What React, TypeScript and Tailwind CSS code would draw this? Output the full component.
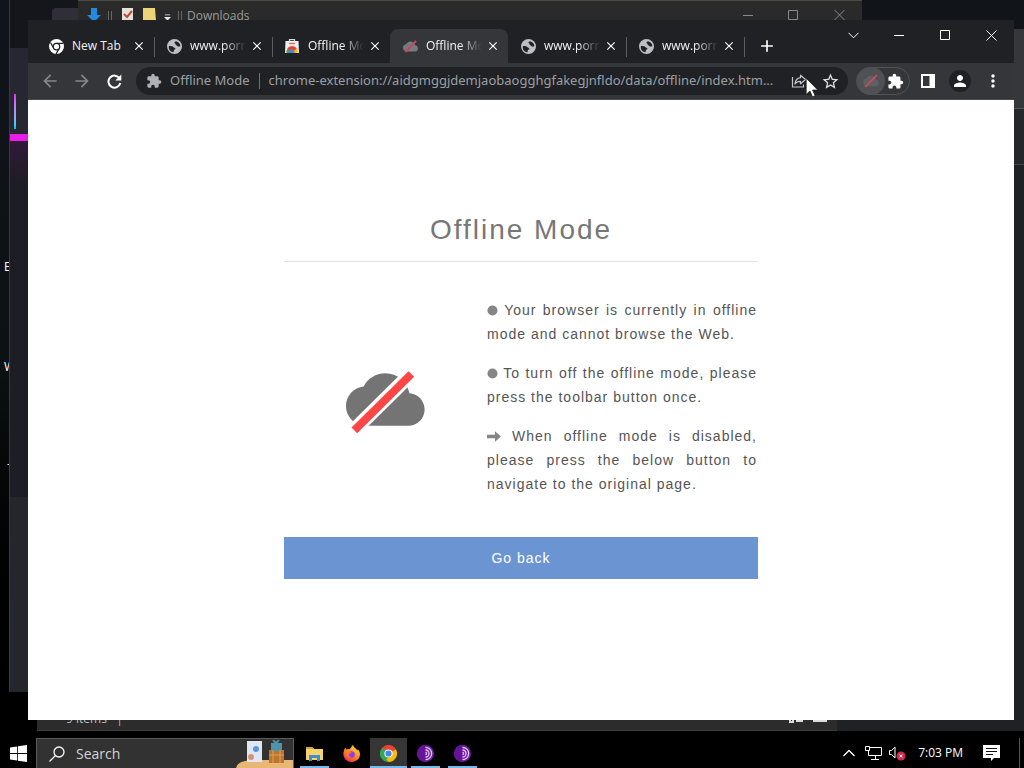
import React from 'react';
import {
  MdAdd,
  MdArrowBack,
  MdArrowForward,
  MdClose,
  MdExtension,
  MdMoreVert,
  MdPerson,
  MdStarBorder,
} from 'react-icons/md';

const CLOUD =
  'M19.35 10.04C18.67 6.59 15.64 4 12 4 9.11 4 6.6 5.64 5.35 8.04 2.34 8.36 0 10.91 0 14c0 3.31 2.69 6 6 6h13c2.76 0 5-2.24 5-5 0-2.64-2.05-4.78-4.65-4.96z';

function ChromeMono() {
  return (
    <svg width="15" height="15" viewBox="0 0 24 24" fill="none">
      <circle cx="12" cy="12" r="12" fill="#fff" />
      <path d="M12 6.8h10.6M7.5 14.6L2.3 5.6M16.5 14.6L11.3 24" stroke="#202124" strokeWidth="2" />
      <circle cx="12" cy="12" r="5.2" fill="#fff" stroke="#202124" strokeWidth="2" />
    </svg>
  );
}

function ChromeColor() {
  return (
    <svg width="17" height="17" viewBox="0 0 24 24">
      <path d="M12 12L1.6 6A12 12 0 0 1 22.4 6z" fill="#ea4335" />
      <path d="M12 12L22.4 6A12 12 0 0 1 12 24z" fill="#fbbc05" />
      <path d="M12 12L12 24A12 12 0 0 1 1.6 6z" fill="#34a853" />
      <path d="M12 6.4h10.6L22.4 6 12 4z" fill="#ea4335" />
      <path d="M16.9 14.8L12 24 9 20z" fill="#fbbc05" />
      <path d="M7.1 14.8L1.6 6l6-.5z" fill="#34a853" />
      <circle cx="12" cy="12" r="5.8" fill="#fff" />
      <circle cx="12" cy="12" r="4.4" fill="#4285f4" />
    </svg>
  );
}

function WebStore() {
  return (
    <svg width="14" height="14" viewBox="0 0 14 14">
      <path d="M4.5 2.5V.6h5v1.9" fill="none" stroke="#d8dadd" strokeWidth="1.2" />
      <path d="M.5 2h13L14 14H0z" fill="#eceef0" />
      <path d="M1.6 14a5.4 5.4 0 0 1 1-4.6L7 12v2z" fill="#34a853" />
      <path d="M7 12l4.6-2.5A5.4 5.4 0 0 1 12.4 14H7z" fill="#fbbc05" />
      <path d="M2.4 9.7a5.4 5.4 0 0 1 9.3 0L9 11.6H5z" fill="#ea4335" />
      <circle cx="7" cy="13" r="2.4" fill="#4285f4" />
      <path d="M4 4.5h6" stroke="#e46a60" strokeWidth="1.4" />
    </svg>
  );
}

function CloudTab() {
  return (
    <svg width="15" height="15" viewBox="0 0 24 24">
      <path d={CLOUD} fill="#777a7e" />
      <path d="M4 21L21 3" stroke="#c2485a" strokeWidth="3.4" />
    </svg>
  );
}

function CloudOff() {
  return (
    <svg width="81" height="65" viewBox="75 55 243 195" role="img" aria-label="Offline">
      <path d={CLOUD} fill="#747474" transform="translate(78 28.7) scale(9.83)" />
      <path d="M88 252L287 56" stroke="#fff" strokeWidth="43" />
      <path d="M103 239L274 70" stroke="#fd4646" strokeWidth="24" />
    </svg>
  );
}

function Bullet() {
  return (
    <svg className="mb-px inline-block" width="11" height="11" viewBox="0 0 11 11">
      <circle cx="5.5" cy="5.5" r="5" fill="#858585" />
    </svg>
  );
}

function ArrowBullet() {
  return (
    <svg className="mb-px inline-block" width="14" height="11" viewBox="0 0 14 11">
      <path d="M0 3.7h8V.3l6 5.2-6 5.2V7.3H0z" fill="#858585" />
    </svg>
  );
}

function Globe() {
  return (
    <svg width="15" height="15" viewBox="0 0 16 16">
      <circle cx="8" cy="8" r="8" fill="#bcbfc3" />
      <path d="M9.5 2.3C8 3 7.500 4 8.500 4.600c1 .5.3 1.500 1.400 2C11 7 10.900 8 12.200 8.100c.8 0 1.300-.4 2.100-.3A6.300 6.300 0 0 0 9.500 2.300z" fill="#202124" />
      <path d="M1.900 7.600C3.500 7.400 6 7.600 6.700 8.500c.7 1 2 .7 2.200 1.700.2 1.200-1.500 1-1.700 2.100-.1.8-.2 1.300-.3 1.900A6.300 6.300 0 0 1 1.900 7.600z" fill="#202124" />
    </svg>
  );
}

const tabs = [
  { title: 'New Tab', icon: <ChromeMono />, active: false },
  { title: 'www.porn', icon: <Globe />, active: false },
  { title: 'Offline Mode', icon: <WebStore />, active: false },
  { title: 'Offline Mode', icon: <CloudTab />, active: true },
  { title: 'www.porn', icon: <Globe />, active: false },
  { title: 'www.porn', icon: <Globe />, active: false },
];

function Tab({ title, icon, active, divider }: { title: string; icon: React.ReactNode; active: boolean; divider: boolean }) {
  return (
    <div className={`relative flex h-full w-[118px] items-center pl-3 pr-[7px] ${active ? 'rounded-t-lg bg-[#35363a]' : ''}`}>
      <button role="tab" aria-selected={active} className="flex min-w-0 flex-1 items-center gap-2">
        <span className="flex w-4 shrink-0 justify-center">{icon}</span>
        <span
          className={`w-[57px] shrink-0 overflow-hidden whitespace-nowrap text-left text-xs text-[#f1f2f4] ${
            title === 'New Tab' ? '' : '[mask-image:linear-gradient(to_right,#000_60%,transparent_98%)]'
          }`}
        >
          {title}
        </span>
      </button>
      <button aria-label={`Close ${title}`} className="flex h-4 w-4 items-center justify-center text-white">
        <MdClose size={14} />
      </button>
      {divider && <span className="absolute -right-px top-2 h-5 w-px bg-[#5b5d61]" />}
    </div>
  );
}

function WindowButtons() {
  return (
    <div className="flex h-[30px] items-center text-white">
      <button aria-label="Search tabs" className="flex w-[46px] justify-center">
        <svg width="11" height="7" viewBox="0 0 11 7" fill="none" stroke="currentColor">
          <path d="M.5 .8l5 5 5-5" />
        </svg>
      </button>
      <button aria-label="Minimize" className="flex w-[46px] justify-center">
        <svg width="10" height="10" viewBox="0 0 10 10" stroke="currentColor">
          <path d="M0 5.5h10" />
        </svg>
      </button>
      <button aria-label="Maximize" className="flex w-[46px] justify-center">
        <svg width="10" height="10" viewBox="0 0 10 10" fill="none" stroke="currentColor">
          <path d="M.5 .5h9v9h-9z" />
        </svg>
      </button>
      <button aria-label="Close" className="flex w-[46px] justify-center">
        <svg width="11" height="11" viewBox="0 0 11 11" stroke="currentColor">
          <path d="M.5 .5l10 10M10.5 .5l-10 10" />
        </svg>
      </button>
    </div>
  );
}

function Toolbar() {
  return (
    <div className="flex h-[37px] shrink-0 items-center border-b border-[#4a4b4e] bg-[#35363a] pl-3 pr-3">
      <div className="flex w-24 shrink-0 items-center gap-3">
        <button aria-label="Back" className="text-[#85878b]">
          <MdArrowBack size={20} />
        </button>
        <button aria-label="Forward" className="text-[#85878b]">
          <MdArrowForward size={20} />
        </button>
        <button aria-label="Reload" className="flex w-5 justify-center text-white">
          <svg width="15" height="15" viewBox="0 0 15 15">
            <path d="M12.6 4.500A6 6 0 1 0 13.300 9" fill="none" stroke="currentColor" strokeWidth="2" />
            <path d="M14.300 .5v6h-6z" fill="currentColor" />
          </svg>
        </button>
      </div>
      <div className="flex h-7 min-w-0 flex-1 items-center rounded-full bg-[#202124] pl-[10px] pr-2 font-['Noto_Sans','Open_Sans',sans-serif] text-[13px] text-[#9aa0a6]">
        <MdExtension size={16} className="shrink-0 text-[#aeb1b5]" />
        <span className="ml-2 shrink-0">Offline Mode</span>
        <span className="mx-[9px] h-4 w-px shrink-0 bg-[#6d7074]" />
        <input
          aria-label="Address"
          readOnly
          value="chrome-extension://aidgmggjdemjaobaogghgfakegjnfldo/data/offline/index.htm..."
          className="min-w-0 flex-1 bg-transparent outline-none"
        />
        <button aria-label="Share" className="relative ml-2 mr-[14px] shrink-0 text-[#c3c6ca]">
          <svg width="16" height="16" viewBox="0 0 16 16" fill="none" stroke="currentColor" strokeWidth="1.2">
            <path d="M1.5 4v10h11v-2.5" />
            <path d="M9.5 2.2l5 4.3-5 4.3V8.3C7 8.2 5.3 9 4 11c.3-3.5 2.3-5.9 5.5-6.3z" strokeLinejoin="round" />
          </svg>
          {/* mouse pointer */}
          <svg className="absolute left-[14px] top-1 z-10" width="14" height="21" viewBox="0 0 12 18">
            <path d="M1 1v14l3.2-3 2.2 5 2.3-1-2.2-4.8H11z" fill="#fff" stroke="#202124" strokeWidth=".7" />
          </svg>
        </button>
        <button aria-label="Bookmark" className="shrink-0 text-[#dfe1e4]">
          <MdStarBorder size={19} />
        </button>
      </div>
      <div className="ml-2 flex h-7 w-[54px] shrink-0 items-center rounded-full border border-[#505256]">
        <button aria-label="Offline Mode extension" className="flex h-7 w-7 items-center justify-center rounded-full bg-[#4f5155]">
          <svg width="16" height="16" viewBox="0 0 24 24">
            <path d={CLOUD} fill="#5e6064" />
            <path d="M3 21L21 3" stroke="#d8485c" strokeWidth="2.4" />
          </svg>
        </button>
        <button aria-label="Extensions" className="ml-[2px] text-white">
          <MdExtension size={17} />
        </button>
      </div>
      <button aria-label="Side panel" className="ml-[11px] shrink-0 text-white">
        <svg width="14" height="14" viewBox="0 0 14 14">
          <path d="M0 0h14v14H0zM2 2v10h6.5V2z" fill="currentColor" fillRule="evenodd" />
        </svg>
      </button>
      <button aria-label="Profile" className="ml-[14px] flex h-[22px] w-[22px] shrink-0 items-center justify-center rounded-full bg-[#202124] text-white">
        <MdPerson size={18} />
      </button>
      <button aria-label="Menu" className="-mr-px ml-3 shrink-0 text-white">
        <MdMoreVert size={20} />
      </button>
    </div>
  );
}

function OfflinePage() {
  return (
    <main className="flex-1 overflow-hidden bg-white font-['Liberation_Sans',Arial,sans-serif] tracking-[1px] text-[#555]">
      <div className="mx-auto w-full max-w-[474px] pt-[110px]">
        <h1 className="border-b border-[#e3e3e3] pb-[11px] text-center text-[28px] leading-10 tracking-[2px] text-[#777]">
          Offline Mode
        </h1>
        <div className="mt-9 flex items-center">
          <div className="flex flex-1 justify-center pt-2">
            <CloudOff />
          </div>
          <div className="mr-px flex w-[270px] flex-col gap-[15px] text-justify text-sm leading-6">
            <p>
              <Bullet /> Your browser is currently in offline mode and cannot browse the Web.
            </p>
            <p>
              <Bullet /> To turn off the offline mode, please press the toolbar button once.
            </p>
            <p>
              <ArrowBullet /> When offline mode is disabled, please press the below button to navigate to the original page.
            </p>
          </div>
        </div>
        <button className="mt-[41px] h-[42px] w-full bg-[#6a95d2] text-sm tracking-[1px] text-white">Go back</button>
      </div>
    </main>
  );
}

function Grip() {
  return (
    <svg className="mt-1" width="4" height="9" viewBox="0 0 4 9" stroke="#666">
      <path d="M.5 0v9M3.5 0v9" />
    </svg>
  );
}

function BackgroundWindows() {
  return (
    <div className="absolute inset-0 overflow-hidden bg-gradient-to-b from-[#11141b] via-[#0d1114] to-black text-xs text-white">
      <span className="absolute left-1 top-[259px]">E</span>
      <span className="absolute left-1 top-[359px]">W</span>
      <span className="absolute left-[7px] top-[456px]">-</span>

      {/* code editor */}
      <div className="absolute bottom-[46px] left-[9px] top-0 w-[300px] border-l border-[#3a3b40] bg-[#1d1d25]">
        <div className="h-12 bg-[#15161c]" />
        <div className="h-[86px] bg-[#272732] pl-1 pt-[46px]">
          <div className="h-[35px] w-[2px] bg-gradient-to-b from-fuchsia-500 to-cyan-400" />
        </div>
        <div className="h-[7px] bg-[#e91ee6]" />
        <div className="h-10 bg-gradient-to-b from-[#32183a] to-[#1d1d25]" />
        <div className="absolute inset-x-0 bottom-0 h-[195px] bg-[#25262b]" />
      </div>

      <div className="absolute bottom-[7px] right-0 top-0 w-[500px] bg-[#202124]">
        <div className="h-[30px] border-b border-[#34363a] bg-[#111418]" />
        <div className="h-[79px] border-b border-[#55565a] bg-[#36373b]" />
        <div className="h-14 border-b border-[#48494d] bg-[#26272a]" />
      </div>

      {/* file explorer, status bar only */}
      <div className="absolute bottom-[7px] left-[37px] h-6 w-[800px] border-b border-[#3b3b3b] bg-[#2c2c2c] pl-[29px] text-[#bbb]">
        <span className="leading-6">9 items &nbsp; |</span>
        <svg className="absolute right-2 top-1" width="40" height="12" viewBox="0 0 40 12">
          <path d="M1 8v3h3V8M7 10h7M24 10h14" fill="none" stroke="#ddd" strokeWidth="2" />
        </svg>
      </div>

      {/* file explorer, title bar only */}
      <div className="absolute left-[52px] top-2 h-6 w-8 rounded bg-[#302f38]" />
      <div className="absolute left-[78px] right-[162px] top-0 flex h-9 items-start border-t border-[#4a4b45] bg-[#292a29] pl-2 pt-[6px] text-[#999]">
        <svg className="mt-px" width="16" height="14" viewBox="0 0 16 14">
          <path d="M5 0h6v7h4l-7 7-7-7h4z" fill="#2589dd" />
        </svg>
        <span className="ml-[6px]">
          <Grip />
        </span>
        <svg className="ml-[9px] mt-px" width="13" height="13" viewBox="0 0 13 13">
          <path d="M1 0h11v13H1z" fill="#e4e2df" />
          <path d="M3 6l3 3 5-6" fill="none" stroke="#b5532c" strokeWidth="2" />
        </svg>
        <svg className="ml-[9px] mt-px" width="13" height="13" viewBox="0 0 13 13">
          <path d="M0 0h12l1 13H0z" fill="#ecd578" />
        </svg>
        <svg className="ml-2 mt-[7px]" width="7" height="7" viewBox="0 0 8 7" fill="#eee">
          <path d="M1 0h6v1H1zM0 3h8L4 7z" />
        </svg>
        <span className="ml-[7px]">
          <Grip />
        </span>
        <span className="ml-[5px] leading-[18px]">Downloads</span>
        <svg className="ml-auto mr-[17px] mt-[3px]" width="102" height="10" viewBox="0 0 102 10" fill="none" stroke="#8a8a88">
          <path d="M0 5.5h10M45.5 .5h9v9h-9zM91.5 0l10 10M101.5 0l-10 10" />
        </svg>
      </div>
    </div>
  );
}

function Tor() {
  return (
    <svg width="17" height="17" viewBox="0 0 16 16" fill="none">
      <circle cx="8" cy="8" r="8" fill="#7421a4" />
      <path d="M8 0a8 8 0 0 0 0 16z" fill="#65149a" />
      <path d="M8 2.2a5.8 5.8 0 0 1 0 11.6M8 4.7a3.3 3.3 0 0 1 0 6.6M8 7a1 1 0 0 1 0 2" stroke="#e6c7f7" strokeWidth="1.2" />
    </svg>
  );
}

function Firefox() {
  return (
    <svg width="17" height="17" viewBox="0 0 24 24">
      <defs>
        <linearGradient id="fox" x1="0.8" y1="0" x2="0.2" y2="1">
          <stop offset="0" stopColor="#ffe14a" />
          <stop offset="0.5" stopColor="#ff8a1f" />
          <stop offset="1" stopColor="#f2255e" />
        </linearGradient>
      </defs>
      <path
        d="M14 0c1 3 3 4 5 6 1 1 1.3 2 1.3 2l.7-2c2 2 3 5 3 8A11.5 11 0 0 1 12 24 11.5 11 0 0 1 .5 13C.5 9 1.7 6.5 3.5 3.5L5 6.5C7 5.5 8 5.5 9.5 6 11 4.5 12 2 14 0z"
        fill="url(#fox)"
      />
      <circle cx="12" cy="13.5" r="4.6" fill="#8a3ff0" />
      <path d="M5 9c3-1 5 0 7 1.5-1 1.5-3 1-4 2.5-.6 2 1 4 4 4-4 2-8-1-7-8z" fill="#ff7a2a" />
    </svg>
  );
}

function Folder() {
  return (
    <svg width="17" height="15" viewBox="0 0 17 15">
      <path d="M0 1h6l2 2h9v11H0z" fill="#f7d36d" />
      <path d="M0 1h6l2 2H0z" fill="#d9a62e" />
      <path d="M3 15V9h11v6h-3v-3H6v3z" fill="#3c8fd0" />
    </svg>
  );
}

const pinned = [
  { name: 'File Explorer', icon: <Folder />, open: true, focused: false },
  { name: 'Firefox', icon: <Firefox />, open: false, focused: false },
  { name: 'Chrome', icon: <ChromeColor />, open: true, focused: true },
  { name: 'Tor Browser', icon: <Tor />, open: true, focused: false },
  { name: 'Tor Browser', icon: <Tor />, open: true, focused: false },
];

function Taskbar() {
  return (
    <footer className="relative flex h-[30px] shrink-0 items-stretch bg-black text-white">
      <button aria-label="Start" className="flex w-9 items-center justify-center">
        <svg width="17" height="17" viewBox="0 0 17 17" fill="#fff">
          <path d="M0 2.4L7.2 1.4V8H0zM8 1.3L17 0v8H8zM0 8.9h7.2v6.7L0 14.6zM8 8.9h9V17l-9-1.3z" />
        </svg>
      </button>
      <label className="flex w-[258px] items-center overflow-hidden border border-b-0 border-[#5c5c5c] bg-[#323232] pl-3">
        <svg width="16" height="16" viewBox="0 0 16 16" fill="none" stroke="#fff" strokeWidth="1.3">
          <circle cx="10" cy="6" r="5" />
          <path d="M6.5 9.5L.5 15.5" />
        </svg>
        <input aria-label="Search" placeholder="Search" className="ml-[11px] w-0 flex-1 bg-transparent text-sm outline-none placeholder:text-[#d2d2d2]" />
        <svg className="self-end" width="57" height="28" viewBox="0 0 57 28">
          <path d="M0 28c2-7 10-8 24-8h33v8z" fill="#e9b774" />
          <path d="M11 1h15v21H11z" fill="#dfe7f6" />
          <circle cx="20" cy="9" r="3" fill="#5b97dd" />
          <circle cx="15" cy="17" r="3" fill="#d99277" />
          <path d="M33 10h15v13H33z" fill="#bd742f" />
          <path d="M35 3h11v8H35z" fill="#4f93ad" />
          <path d="M33 15h15M37 10v13M44 10v13" stroke="#e0a25c" />
          <path d="M37 0l3 3 3-3" stroke="#4f93ad" strokeWidth="2" fill="none" />
        </svg>
      </label>
      <nav className="ml-[2px] flex">
        {pinned.map((app, i) => (
          <button
            key={i}
            aria-label={app.name}
            className={`relative flex w-[37px] items-center justify-center ${app.focused ? 'bg-[#363636]' : ''}`}
          >
            {app.icon}
            {app.open && <span className={`absolute bottom-0 h-[2px] bg-[#76b9ed] ${app.focused ? 'inset-x-0' : 'inset-x-1'}`} />}
          </button>
        ))}
      </nav>
      <div className="ml-auto flex items-center text-xs">
        <button aria-label="Show hidden icons">
          <svg width="12" height="8" viewBox="0 0 12 8" fill="none" stroke="#fff" strokeWidth="1.3">
            <path d="M.5 7L6 1.5 11.5 7" />
          </svg>
        </button>
        <svg className="ml-[10px]" width="17" height="14" viewBox="0 0 17 14" fill="none" stroke="#fff">
          <path d="M5 1.5h11.5v8H3.5V5M10.5 9.5v4M6 13.5h8M.5 .5h4v4h-4z" />
        </svg>
        <svg className="ml-[7px]" width="17" height="16" viewBox="0 0 17 16">
          <path d="M.5 5.5h2L6 2v11L2.5 9.5h-2z" fill="none" stroke="#fff" />
          <circle cx="12" cy="11" r="4.5" fill="#d02a45" />
          <path d="M10.5 9.5l3 3M13.5 9.5l-3 3" stroke="#fff" />
        </svg>
        <span className="ml-3 whitespace-nowrap">7:03 PM</span>
        <button aria-label="Notifications" className="ml-5 mr-[19px]">
          <svg width="17" height="16" viewBox="0 0 17 16">
            <path d="M0 0h17v13h-6l-3 3v-3H0z" fill="#fff" />
            <path d="M3 3.5h11M3 6.5h11M3 9.5h7" stroke="#111" />
          </svg>
        </button>
        <span className="h-[30px] w-[5px] border-l border-[#555]" />
      </div>
    </footer>
  );
}

export default function App() {
  return (
    <div className="flex h-screen flex-col overflow-hidden bg-black font-['Open_Sans','Noto_Sans',sans-serif]">
      <div className="relative flex min-h-0 flex-1 flex-col">
        <BackgroundWindows />
        <div className="relative mb-[18px] ml-7 mr-[10px] mt-5 flex min-h-0 flex-1 flex-col bg-[#202124]">
          <div className="flex h-[43px] shrink-0 items-start">
            <div role="tablist" className="mt-[9px] flex h-[34px] items-center pl-2">
              {tabs.map((tab, i) => (
                <Tab
                  key={i}
                  title={tab.title}
                  icon={tab.icon}
                  active={tab.active}
                  divider={!tab.active && !tabs[i + 1]?.active}
                />
              ))}
              <button aria-label="New tab" className="ml-[13px] text-white">
                <MdAdd size={20} />
              </button>
            </div>
            <div className="ml-auto">
              <WindowButtons />
            </div>
          </div>
          <Toolbar />
          <OfflinePage />
        </div>
      </div>
      <Taskbar />
    </div>
  );
}
